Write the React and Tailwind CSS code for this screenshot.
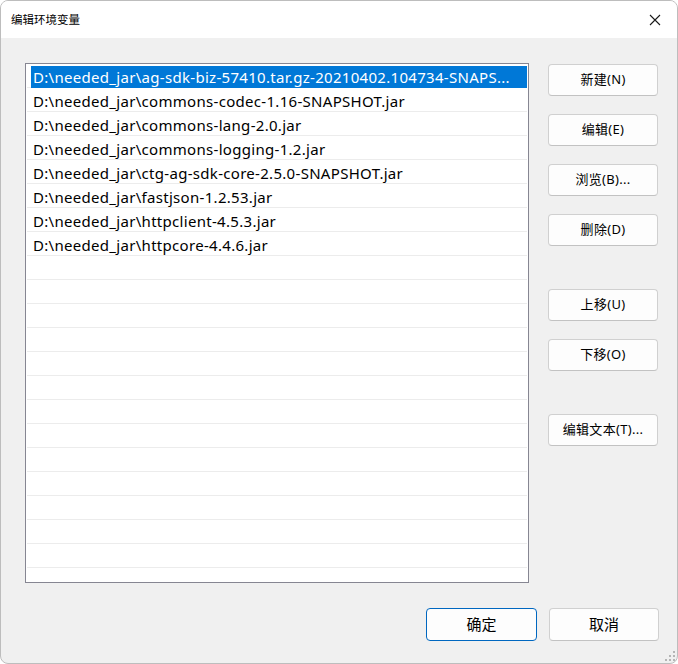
import { useState } from "react";

const paths = [
  "D:\\needed_jar\\ag-sdk-biz-57410.tar.gz-20210402.104734-SNAPS...",
  "D:\\needed_jar\\commons-codec-1.16-SNAPSHOT.jar",
  "D:\\needed_jar\\commons-lang-2.0.jar",
  "D:\\needed_jar\\commons-logging-1.2.jar",
  "D:\\needed_jar\\ctg-ag-sdk-core-2.5.0-SNAPSHOT.jar",
  "D:\\needed_jar\\fastjson-1.2.53.jar",
  "D:\\needed_jar\\httpclient-4.5.3.jar",
  "D:\\needed_jar\\httpcore-4.4.6.jar",
];

const ROWS = 21;

function SideButton({ label, className = "" }) {
  return (
    <button
      className={`h-[32px] w-[110px] rounded-[4px] border border-[#d0d0d0] border-b-[#c2c2c2] bg-[#fdfdfd] text-[13px] tracking-[0.3px] text-black ${className}`}
    >
      {label}
    </button>
  );
}

function PathList({ selected, onSelect }) {
  const rows = Array.from({ length: ROWS }, (_, i) => paths[i] ?? null);
  return (
    <div className="h-[520px] w-[504px] overflow-hidden border border-[#868692] bg-white px-[1px]">
      {rows.map((p, i) => (
        <div
          key={i}
          onClick={() => p && onSelect(i)}
          className="flex h-[24px] border-b border-[#ececec]"
        >
          {p && (
            <div
              className={`mt-[2px] ml-[4px] flex h-[22px] flex-1 items-center overflow-hidden whitespace-nowrap pl-[2px] text-[15px] tracking-[0.3px] ${
                selected === i ? "bg-[#0078d7] text-white" : "text-black"
              }`}
            >
              {p}
            </div>
          )}
        </div>
      ))}
    </div>
  );
}

export default function App() {
  const [selected, setSelected] = useState(0);

  return (
    <div className="h-[664px] w-[678px] bg-white">
      <div
        className="relative flex h-[664px] w-[678px] flex-col overflow-hidden rounded-[8px] border border-[#bdbdbd] bg-[#f0f0f0]"
        style={{ fontFamily: '"Noto Sans", "Noto Sans CJK SC", sans-serif' }}
      >
        {/* title bar */}
        <div className="flex h-[37px] items-center justify-between bg-white pl-[10px] pr-[16px]">
          <span className="text-[11.5px] text-black">编辑环境变量</span>
          <svg width="12" height="12" viewBox="0 0 12 12">
            <path d="M1 1 L11 11 M11 1 L1 11" stroke="#1a1a1a" strokeWidth="1.1" />
          </svg>
        </div>

        {/* list + side buttons */}
        <div className="flex pt-[25px] pl-[24px]">
          <PathList selected={selected} onSelect={setSelected} />
          <div className="ml-[19px] mt-[1px] flex flex-col">
            <SideButton label="新建(N)" />
            <SideButton label="编辑(E)" className="mt-[18px]" />
            <SideButton label="浏览(B)..." className="mt-[18px]" />
            <SideButton label="删除(D)" className="mt-[18px]" />
            <SideButton label="上移(U)" className="mt-[43px]" />
            <SideButton label="下移(O)" className="mt-[18px]" />
            <SideButton label="编辑文本(T)..." className="mt-[43px]" />
          </div>
        </div>

        {/* bottom buttons */}
        <div className="flex justify-end gap-[12px] pt-[25px] pr-[18px]">
          <button className="h-[33px] w-[111px] rounded-[4px] border border-[#0067c0] bg-[#fdfdfd] text-[15px] text-black">
            确定
          </button>
          <button className="h-[33px] w-[110px] rounded-[4px] border border-[#d0d0d0] border-b-[#c2c2c2] bg-[#fdfdfd] text-[15px] text-black">
            取消
          </button>
        </div>

        {/* resize grip */}
        <svg className="absolute right-[2px] bottom-[2px]" width="10" height="10" viewBox="0 0 10 10">
          {[
            [8, 0], [8, 4], [4, 4], [8, 8], [4, 8], [0, 8],
          ].map(([x, y]) => (
            <rect key={`${x}-${y}`} x={x} y={y} width="2" height="2" fill="#b5b5b5" />
          ))}
        </svg>
      </div>
    </div>
  );
}
